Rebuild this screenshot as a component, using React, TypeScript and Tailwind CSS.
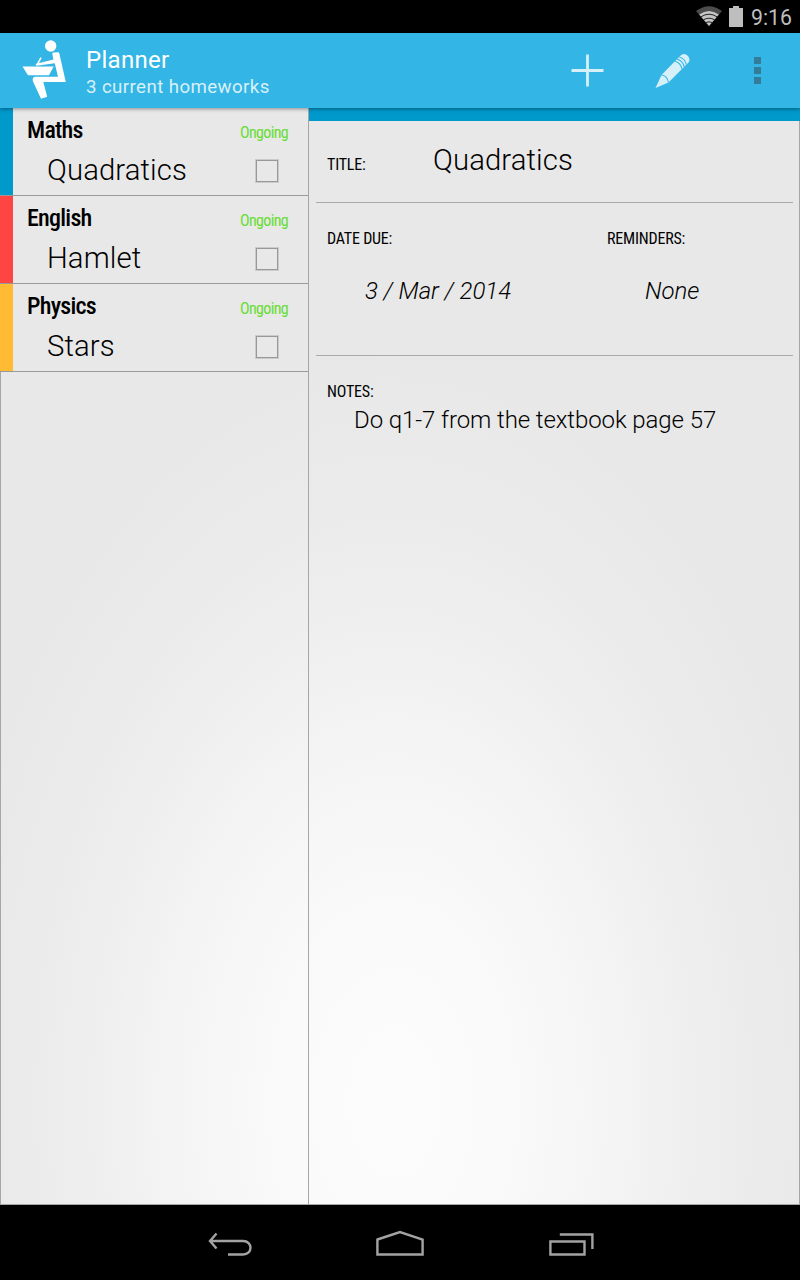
import React from "react";

const homeworks = [
  { subject: "Maths", title: "Quadratics", status: "Ongoing", color: "bg-[#0099cc]" },
  { subject: "English", title: "Hamlet", status: "Ongoing", color: "bg-[#ff4444]" },
  { subject: "Physics", title: "Stars", status: "Ongoing", color: "bg-[#ffbb33]" },
];

const StatusBar = () => (
  <div className="flex h-[33px] items-center justify-end bg-black pr-2 text-[#bebebe]">
    <svg width="26" height="20" viewBox="0 0 26 20" className="mt-[-1px] mr-[7px]">
      <path d="M0 5Q13 -4.6 26 5L13 20Z" fill="#4c4c4c" />
      <path d="M3.2 8.6Q13 1.2 22.8 8.6L13 20Z" fill="#c4c4c4" />
      <path d="M5 10.8Q13 5.6 21 10.8M7.4 13.8Q13 10.6 18.6 13.8M9.6 16.6Q13 15 16.4 16.6" fill="none" stroke="#111" strokeWidth="0.9" />
    </svg>
    <svg width="14" height="21" viewBox="0 0 14 21" className="mt-[-1px] mr-2" fill="#bebebe">
      <path d="M0 2H4V0H10V2H14V21H0Z" />
    </svg>
    <span className="pt-px text-[21.3px] leading-[33px]">9:16</span>
  </div>
);

const Header = () => (
  <header className="relative z-10 flex h-[75px] bg-[#33b5e5] shadow-[0_1px_4px_rgba(0,0,0,0.4)]">
    <svg width="46" height="62" viewBox="0 0 46 62" className="mt-[6px] ml-[22px] shrink-0" fill="#fff">
      <circle cx="28.7" cy="7" r="5.7" />
      <path d="M0.5 27.4H31.7L27 36.2H6Z" />
      <path d="M30.3 14.5Q30.3 13.6 31.3 13.6L36 13.2Q37 13.2 37.2 14L43.8 43H21.3L25.2 57.8L19 59.8L10.8 42Q10 38 13.5 37.8H36L32.7 24.2L14.5 26.8L13.5 25L31.4 20.6Z" />
      <path d="M19 18.6L15.2 25.6" stroke="#fff" strokeWidth="1.6" />
    </svg>
    <div className="ml-[18px] grow">
      <h1 className="mt-[13px] text-2xl leading-7 tracking-[0.3px] text-white">Planner</h1>
      <p className="text-[18.7px] leading-[26px] tracking-[0.4px] text-[#d8f0fa]">3 current homeworks</p>
    </div>
    <svg width="33" height="33" viewBox="0 0 33 33" className="mt-[21px] mr-[51px]">
      <path d="M16.5 0.5V32.5M0.5 16.5H32.5" stroke="#d6f0fa" strokeWidth="2.8" />
    </svg>
    <svg width="35" height="36" viewBox="0 0 35 36" className="mt-5 mr-16">
      <path d="M0.5 35L6.5 22L25 3Q29 -1 33 3Q36 7 33 10L13.5 29.5Z" fill="#d6f0fa" />
      <path d="M6.5 22Q12 22.5 13.5 29.5M19.2 7.8Q26 10 27 16M21.4 5.8Q28 7.8 29.2 13.8M23.6 3.8Q30 5.4 31.4 11.6" fill="none" stroke="#33b5e5" strokeWidth="1.1" />
    </svg>
    <div className="mt-6 mr-[39px] flex flex-col gap-[3px]">
      {[0, 1, 2].map((i) => (
        <div key={i} className="h-[7px] w-[7px] bg-[#337d9b]" />
      ))}
    </div>
  </header>
);

const HomeworkList = () => (
  <aside className="w-[309px] shrink-0 border-r border-b border-[#a6a6a6]">
    {homeworks.map((hw) => (
      <div key={hw.subject} className="flex h-[88px] border-b border-[#999]">
        <div className={`w-[13px] ${hw.color}`} />
        <div className="grow pt-[7px] pr-5 pl-[14px]">
          <div className="flex h-[30px] justify-between">
            <span className="text-2xl leading-[30px] font-[480] tracking-[-0.75px] [font-stretch:75%]">{hw.subject}</span>
            <span className="pt-[3px] text-base leading-[30px] tracking-[-0.65px] text-[#66dd33] [font-stretch:75%]">{hw.status}</span>
          </div>
          <div className="flex justify-between pr-[10px] pl-5">
            <span className="text-[29.3px] leading-[50px] font-light tracking-[0.1px]">{hw.title}</span>
            <div className="mt-[15px] h-[22px] w-[22px] border border-[#999] shadow-[0_0_0_1px_rgba(0,0,0,0.12)]" />
          </div>
        </div>
      </div>
    ))}
    <div className="h-[832px] border-l border-[#a6a6a6]" />
  </aside>
);

const Label = ({ children }: { children: React.ReactNode }) => (
  <div className="text-base leading-5 tracking-[-0.2px] [font-stretch:75%]">{children}</div>
);

const Details = () => (
  <main className="grow border-r border-b border-[#a6a6a6]">
    <div className="-mr-px h-[13px] bg-[#0099cc]" />
    <div className="mr-[6px] ml-[7px]">
      <section className="flex h-[82px] border-b border-[#aaa] pl-[11px]">
        <div className="w-[106px] pt-[34px]">
          <Label>TITLE:</Label>
        </div>
        <div className="pt-[14px] text-[29.3px] leading-[50px] font-light tracking-[0.1px]">Quadratics</div>
      </section>
      <section className="flex h-[153px] border-b border-[#aaa] pt-[26px] pl-[11px]">
        <div className="w-[280px]">
          <Label>DATE DUE:</Label>
          <p className="mt-[17px] ml-[38px] text-2xl leading-[50px] font-light tracking-[-0.05px] italic">3 / Mar / 2014</p>
        </div>
        <div>
          <Label>REMINDERS:</Label>
          <p className="mt-[17px] ml-[38px] text-2xl leading-[50px] font-light tracking-[-0.05px] italic">None</p>
        </div>
      </section>
      <section className="pt-[26px] pl-[11px]">
        <Label>NOTES:</Label>
        <p className="mt-[3px] ml-[27px] text-2xl leading-[30px] font-light tracking-[-0.09px]">Do q1-7 from the textbook page 57</p>
      </section>
    </div>
  </main>
);

const NavBar = () => (
  <nav className="flex h-[75px] bg-black pt-[25px] pl-[207px]">
    <svg width="46" height="32" viewBox="0 0 46 32" fill="none" stroke="#a3a3a3" strokeWidth="2.4">
      <path d="M9.5 3.5L3 11L9.5 18.5M3 11H36C46 11 46 24.5 36 24.5H21" />
    </svg>
    <svg width="50" height="32" viewBox="0 0 50 32" className="mr-[123px] ml-[122px]" fill="none" stroke="#a3a3a3" strokeWidth="2.4">
      <path d="M2.4 9.5L25 2L47.6 9.5V24.5H2.4Z" />
    </svg>
    <svg width="46" height="32" viewBox="0 0 46 32" fill="none" stroke="#a3a3a3" strokeWidth="2.4">
      <path d="M2.4 11.5H36.5V24.5H2.4ZM11.8 4.5H44.4V19" />
    </svg>
  </nav>
);

export default function App() {
  return (
    <div className="h-[1280px] w-[800px] overflow-hidden bg-black font-[Roboto,sans-serif] text-black">
      <StatusBar />
      <Header />
      <div className="flex h-[1097px] bg-[radial-gradient(ellipse_460px_750px_at_393px_994px,#fcfcfc_0%,#fbfbfb_15%,#f9f9f9_28%,#f6f6f6_41%,#f3f3f3_52%,#efefef_64%,#ebebeb_80%,#e8e8e8_100%)]">
        <HomeworkList />
        <Details />
      </div>
      <NavBar />
    </div>
  );
}
